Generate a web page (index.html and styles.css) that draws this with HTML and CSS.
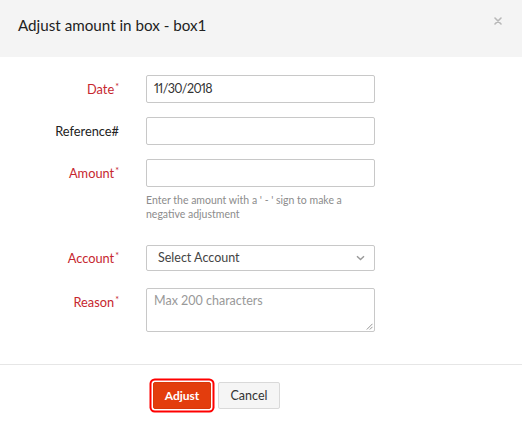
FILE: index.html
```html
<!DOCTYPE html>
<html>
<head>
<meta charset="utf-8">
<link rel="stylesheet" href="styles.css">
</head>
<body>
<div class="modal">
  <div class="header">
    <h1 class="title">Adjust amount in box - box1</h1>
    <span class="close">
      <svg width="8" height="8" viewBox="0 0 8 8"><path d="M1 1L7 7M7 1L1 7" stroke="#b8b8b8" stroke-width="1.6" stroke-linecap="round"/></svg>
    </span>
  </div>
  <div class="body">
    <div class="row">
      <label class="label req">Date<sup>*</sup></label>
      <div class="field"><div class="input date">11/30/2018</div></div>
    </div>
    <div class="row">
      <label class="label">Reference#</label>
      <div class="field"><div class="input"></div></div>
    </div>
    <div class="row row-amount">
      <label class="label req">Amount<sup>*</sup></label>
      <div class="field">
        <div class="input"></div>
        <p class="help">Enter the amount with a ' - ' sign to make a negative adjustment</p>
      </div>
    </div>
    <div class="row row-account">
      <label class="label label-short req">Account<sup>*</sup></label>
      <div class="field">
        <div class="select">
          <span>Select Account</span>
          <svg class="chev" width="9" height="6" viewBox="0 0 9 6"><path d="M1 1.2L4.5 4.6L8 1.2" fill="none" stroke="#999" stroke-width="1.4"/></svg>
        </div>
      </div>
    </div>
    <div class="row row-reason">
      <label class="label req">Reason<sup>*</sup></label>
      <div class="field">
        <div class="textarea">
          <span class="ph">Max 200 characters</span>
          <svg class="grip" width="7" height="7" viewBox="0 0 7 7"><path d="M6.5 0.8L0.8 6.5M6.5 3.8L3.8 6.5" stroke="#8a8a8a" stroke-width="0.9"/></svg>
        </div>
      </div>
    </div>
  </div>
  <div class="footer">
    <button class="btn btn-primary">Adjust</button>
    <button class="btn btn-default">Cancel</button>
  </div>
</div>
</body>
</html>
```

FILE: styles.css
```css
* { box-sizing: border-box; }
html, body { margin: 0; padding: 0; background: #fff; }
body {
  font-family: "Lato", "Liberation Sans", sans-serif;
  color: #222;
  width: 522px;
  height: 427px;
  overflow: hidden;
}
.modal { width: 522px; }
.header {
  height: 57px;
  background: #f4f4f4;
  display: flex;
  align-items: flex-start;
  justify-content: space-between;
  padding: 0 20px 0 18px;
}
.title {
  margin: 0;
  padding-top: 14px;
  font-size: 15.2px;
  font-weight: 400;
  color: #222;
  line-height: 22px;
}
.close {
  padding-top: 17px;
  display: flex;
}
.body {
  padding: 18px 0 32px 0;
}
.row {
  display: flex;
  align-items: flex-start;
  margin-bottom: 14px;
}
.row-amount { margin-bottom: 23px; }
.row-account { margin-bottom: 17px; }
.row-reason { margin-bottom: 0; }
.label {
  display: block;
  width: 120px;
  height: 28px;
  text-align: right;
  font-size: 12.8px;
  line-height: 28px;
  color: #222;
  padding-right: 1px;
  white-space: nowrap;
}
.label-short { height: 26px; line-height: 26px; }
.label.req { color: #c6262e; }
.label sup {
  font-size: 9px;
  line-height: 0;
  vertical-align: 0;
  position: relative;
  top: -4px;
  margin-left: 1px;
}
.field {
  margin-left: 26px;
  width: 229px;
}
.input {
  height: 28px;
  border: 1px solid #c8c8c8;
  border-radius: 2px;
  padding: 0 7px;
  font-size: 12.5px;
  line-height: 26px;
  color: #333;
}
.date {
  font-variant-numeric: proportional-nums;
  letter-spacing: -0.6px;
}
.help {
  margin: 6px 0 0 0;
  font-size: 10.5px;
  line-height: 14.4px;
  color: #8c8c8c;
}
.select {
  height: 26px;
  border: 1px solid #c8c8c8;
  border-radius: 2px;
  padding: 0 9px 0 11px;
  display: flex;
  align-items: center;
  justify-content: space-between;
  font-size: 12.5px;
  color: #444;
}
.textarea {
  height: 44px;
  border: 1px solid #c8c8c8;
  border-radius: 2px;
  padding: 3px 7px;
  font-size: 12.5px;
  line-height: 18px;
  position: relative;
}
.ph { color: #999; }
.grip {
  position: absolute;
  right: 1px;
  bottom: 1px;
}
.footer {
  border-top: 1px solid #e6e6e6;
  padding: 17px 0 0 153px;
  display: flex;
  gap: 7px;
}
.btn {
  height: 27px;
  border-radius: 2px;
  font-family: "Lato", "Liberation Sans", sans-serif;
  font-size: 12.5px;
  padding: 0;
  cursor: pointer;
}
.btn-primary {
  width: 58px;
  background: #e33d0d;
  border: 1px solid #d8380a;
  color: #fff;
  font-weight: 700;
  font-size: 12px;
  box-shadow: 0 0 0 1.5px #fff, 0 0 0 3.5px #ff0000;
}
.btn-default {
  width: 62px;
  background: #f5f5f5;
  border: 1px solid #d9d9d9;
  color: #333;
}
```
